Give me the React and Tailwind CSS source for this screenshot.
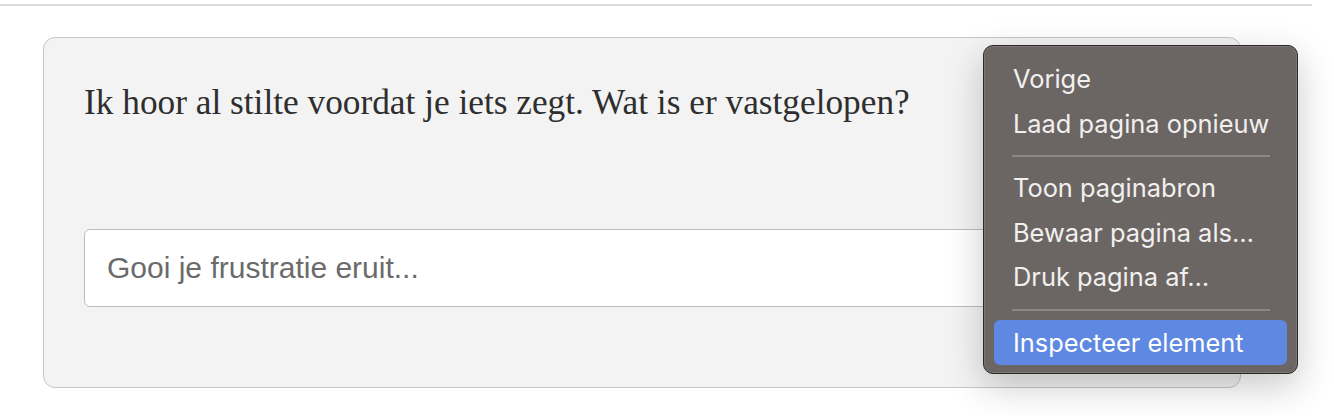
import React from "react";

const menuItems = [
  { type: "item", label: "Vorige" },
  { type: "item", label: "Laad pagina opnieuw" },
  { type: "sep", h: "h-[20px]" },
  { type: "item", label: "Toon paginabron" },
  { type: "item", label: "Bewaar pagina als…" },
  { type: "item", label: "Druk pagina af…" },
  { type: "sep", h: "h-[21px]" },
  { type: "item", label: "Inspecteer element", active: true },
];

function ContextMenu() {
  return (
    <div className="absolute left-[983px] top-[45px] w-[315px] h-[329px] rounded-[10px] border border-[#2c2a29] bg-[#6b6664] shadow-[0_12px_36px_rgba(0,0,0,0.22),inset_0_0_0_1px_rgba(255,255,255,0.12)] px-[10px] pt-[10.75px] font-['Inter',sans-serif] text-[25.4px] text-[#f2f0ef]">
      {menuItems.map((it, i) =>
        it.type === "sep" ? (
          <div key={i} className={`${it.h} flex items-center pl-[18px] pr-[17px]`}>
            <div className="h-[1.5px] w-full bg-[#8c8786]" />
          </div>
        ) : (
          <div
            key={i}
            className={`h-[44.5px] flex items-center pl-[19px] rounded-[6px] leading-none ${
              it.active ? "bg-[#5e88e2] text-white" : ""
            }`}
          >
            {it.label}
          </div>
        )
      )}
    </div>
  );
}

export default function App() {
  return (
    <div className="relative w-[1334px] h-[416px] bg-white overflow-hidden">
      {/* header rule */}
      <div className="mt-[4px] h-[2px] w-[1312px] bg-[#dedede]" />

      {/* chat card */}
      <div className="ml-[43px] mt-[31px] w-[1198px] h-[351px] rounded-[12px] border-[1.5px] border-[#c6c6c6] bg-[#f3f3f3] px-10 pt-[45px] flex flex-col">
        <p className="font-['Liberation_Serif',serif] text-[35.3px] leading-[40px] text-[#2e2e2e]">
          Ik hoor al stilte voordat je iets zegt. Wat is er vastgelopen?
        </p>
        <input
          type="text"
          placeholder="Gooi je frustratie eruit..."
          className="mt-[106px] h-[78px] w-full rounded-[6px] border-[1.5px] border-[#bdbdbd] bg-white pl-[22px] font-['Liberation_Sans',sans-serif] text-[30px] text-[#333] placeholder:text-[#6b6b6b] outline-none"
        />
      </div>

      <ContextMenu />
    </div>
  );
}
